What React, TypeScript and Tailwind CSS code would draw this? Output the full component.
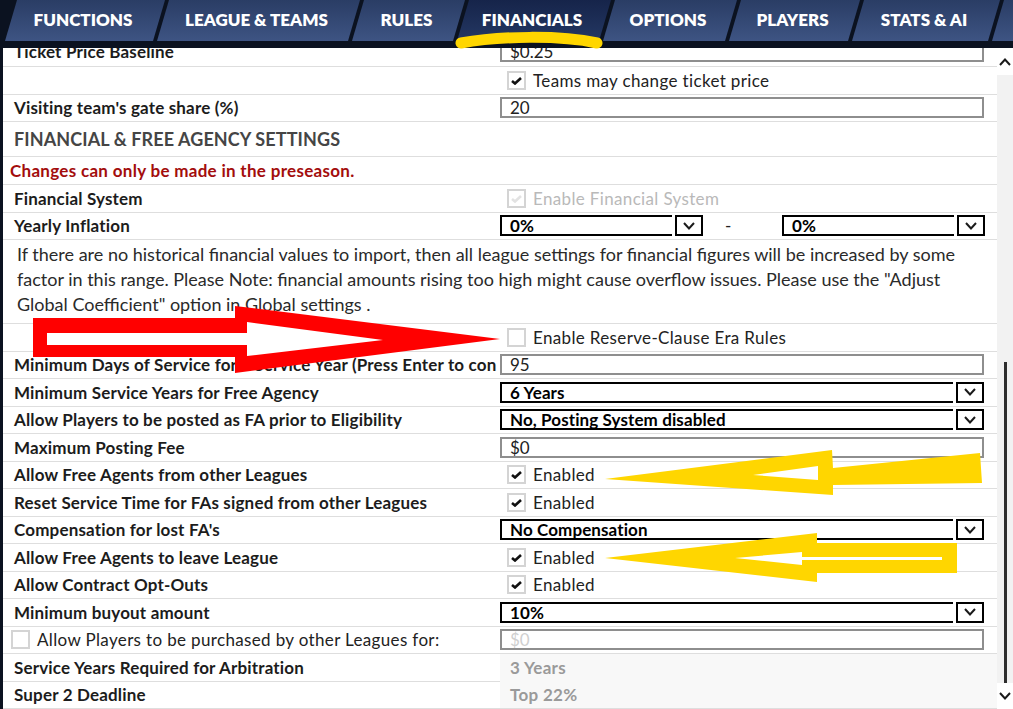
import React from 'react';

const tabs = [
  { name: 'FUNCTIONS', w: 'w-[160px]' },
  { name: 'LEAGUE & TEAMS', w: 'w-[203px]' },
  { name: 'RULES', w: 'w-[113px]' },
  { name: 'FINANCIALS', w: 'w-[154px]', active: true },
  { name: 'OPTIONS', w: 'w-[134px]' },
  { name: 'PLAYERS', w: 'w-[131px]' },
  { name: 'STATS & AI', w: 'w-[148px]' },
  { name: '', w: 'w-[60px]' },
];

const Chevron = ({ up = false }: { up?: boolean }) => (
  <svg width="12" height="8" viewBox="0 0 12 8">
    <polyline
      points={up ? '1,7 6,1.5 11,7' : '1,1 6,6.5 11,1'}
      fill="none"
      stroke="#1a1a1a"
      strokeWidth="2"
    />
  </svg>
);

const Check = ({ checked, disabled = false }: { checked: boolean; disabled?: boolean }) => (
  <div className="flex h-[19px] w-[19px] shrink-0 items-center justify-center border-2 border-[#d4d4d4] bg-white">
    {checked && (
      <svg width="11" height="9" viewBox="0 0 11 9">
        <path
          d="M1 5 L4 7.5 L10 2"
          fill="none"
          stroke={disabled ? '#e2e2e2' : '#111'}
          strokeWidth="2.6"
        />
      </svg>
    )}
  </div>
);

const Input = ({ value, disabled = false }: { value: string; disabled?: boolean }) => (
  <div
    className={`flex h-[21px] w-[484px] items-center border-2 border-[#8e8e8e] bg-white pl-[8px] text-[17px] ${
      disabled ? 'text-[#d0d0d0]' : 'text-[#222]'
    }`}
  >
    {value}
  </div>
);

const Select = ({ value, w = 'w-[453px]' }: { value: string; w?: string }) => (
  <div className="flex items-center">
    <div
      className={`flex h-[21px] ${w} items-center border-2 border-r-0 border-black bg-white pl-[8px] text-[17px] font-bold tracking-[0.1px] text-black`}
    >
      {value}
    </div>
    <div className="ml-[3px] flex h-[21px] w-[28px] items-center justify-center border-2 border-black bg-white">
      <Chevron />
    </div>
  </div>
);

const Toggle = ({ text, checked, disabled = false }: { text: string; checked: boolean; disabled?: boolean }) => (
  <div className="flex items-center pl-[7px]">
    <Check checked={checked} disabled={disabled} />
    <span className={`ml-[7px] text-[17px] tracking-[0.35px] ${disabled ? 'text-[#b9b9b9]' : 'text-[#222]'}`}>
      {text}
    </span>
  </div>
);

const Static = ({ text }: { text: string }) => (
  <div className="flex h-[27px] w-[497px] items-center bg-[#f8f8f8] pl-[10px] text-[17px] font-bold tracking-[0.3px] text-[#9a9a9a]">
    {text}
  </div>
);

const Row = ({
  label,
  children,
  h = 'h-[27.5px]',
}: {
  label?: React.ReactNode;
  children?: React.ReactNode;
  h?: string;
}) => (
  <div className={`flex ${h} shrink-0 items-center border-b border-[#dedede]`}>
    <div className="w-[497px] shrink-0 overflow-hidden whitespace-nowrap pl-[11px] text-[17px] font-bold tracking-[0.17px] text-[#1c1c1c]">
      {label}
    </div>
    <div className="flex w-[497px] items-center">{children}</div>
  </div>
);

export default function App() {
  return (
    <div className="relative h-[709px] w-[1013px] overflow-hidden bg-[#0b1220] font-[Lato,sans-serif]">
      {/* tab strip */}
      <div className="flex h-[41px] pl-[5px]">
        {tabs.map((t, i) => (
          <div
            key={i}
            className={`${t.w} ${i > 0 ? 'ml-[-8px]' : ''} flex shrink-0 items-center justify-center pb-[1px] pr-[4px] text-[17px] font-extrabold text-white [clip-path:polygon(12px_0,100%_0,calc(100%-12px)_100%,0_100%)] ${
              t.active
                ? 'bg-gradient-to-b from-[#16244a] to-[#243863]'
                : 'bg-gradient-to-b from-[#2a3d65] to-[#3e5483]'
            }`}
          >
            {t.name}
          </div>
        ))}
      </div>
      <div className="h-[7px]" />

      <div className="flex h-[661px]">
        <div className="w-[3px] shrink-0" />
        <div className="flex w-[994px] flex-col overflow-hidden bg-white">
          <div className="mt-[-11px]" />
          <Row label="Ticket Price Baseline" h="h-[30px]">
            <Input value="$0.25" />
          </Row>
          <Row>
            <Toggle text="Teams may change ticket price" checked />
          </Row>
          <Row label="Visiting team's gate share (%)">
            <Input value="20" />
          </Row>
          <div className="flex h-[35px] shrink-0 items-center border-b border-[#dedede] pl-[11px] text-[18px] font-bold tracking-[0.1px] text-[#454545]">
            FINANCIAL &amp; FREE AGENCY SETTINGS
          </div>
          <div className="flex h-[28px] shrink-0 items-center border-b border-[#dedede] pl-[7px] text-[17px] font-bold tracking-[0.3px] text-[#a30d0d]">
            Changes can only be made in the preseason.
          </div>
          <Row label="Financial System">
            <Toggle text="Enable Financial System" checked disabled />
          </Row>
          <Row label="Yearly Inflation">
            <Select value="0%" w="w-[172px]" />
            <span className="w-[79px] pl-[22px] text-[17px] text-[#222]">-</span>
            <Select value="0%" w="w-[172px]" />
          </Row>
          <div className="flex h-[84px] shrink-0 flex-col whitespace-nowrap border-b border-[#dedede] pl-[14px] pt-[2px] text-[18px] leading-[25px] text-[#2a2a2a]">
            <div>
              If there are no historical financial values to import, then all league settings for financial figures will be increased by some
            </div>
            <div>
              factor in this range. Please Note: financial amounts rising too high might cause overflow issues. Please use the "Adjust
            </div>
            <div>Global Coefficient" option in Global settings .</div>
          </div>
          <Row>
            <Toggle text="Enable Reserve-Clause Era Rules" checked={false} />
          </Row>
          <Row label="Minimum Days of Service for a Service Year (Press Enter to con">
            <Input value="95" />
          </Row>
          <Row label="Minimum Service Years for Free Agency">
            <Select value="6 Years" />
          </Row>
          <Row label="Allow Players to be posted as FA prior to Eligibility">
            <Select value="No, Posting System disabled" />
          </Row>
          <Row label="Maximum Posting Fee">
            <Input value="$0" />
          </Row>
          <Row label="Allow Free Agents from other Leagues">
            <Toggle text="Enabled" checked />
          </Row>
          <Row label="Reset Service Time for FAs signed from other Leagues">
            <Toggle text="Enabled" checked />
          </Row>
          <Row label="Compensation for lost FA's">
            <Select value="No Compensation" />
          </Row>
          <Row label="Allow Free Agents to leave League">
            <Toggle text="Enabled" checked />
          </Row>
          <Row label="Allow Contract Opt-Outs">
            <Toggle text="Enabled" checked />
          </Row>
          <Row label="Minimum buyout amount">
            <Select value="10%" />
          </Row>
          <Row
            label={
              <div className="ml-[-3px] flex items-center font-normal">
                <Check checked={false} />
                <span className="ml-[7px] text-[17px] tracking-[0.35px] text-[#222]">
                  Allow Players to be purchased by other Leagues for:
                </span>
              </div>
            }
          >
            <Input value="$0" disabled />
          </Row>
          <Row label="Service Years Required for Arbitration">
            <Static text="3 Years" />
          </Row>
          <Row label="Super 2 Deadline">
            <Static text="Top 22%" />
          </Row>
        </div>

        {/* scrollbar */}
        <div className="flex w-[16px] shrink-0 flex-col bg-white">
          <div className="flex h-[27px] items-center justify-center">
            <Chevron up />
          </div>
          <div className="flex-1 bg-[#f2f2f2]">
            <div className="ml-[7px] mt-[287px] h-[321px] w-[3px] bg-[#2e2e2e]" />
          </div>
          <div className="flex h-[26px] items-center justify-center">
            <Chevron />
          </div>
        </div>
      </div>

      {/* hand-drawn annotations */}
      <svg className="pointer-events-none absolute left-0 top-0" width="1013" height="709" viewBox="0 0 1013 709">
        <path d="M461 43 C 500 36, 560 35, 597 43" fill="none" stroke="#ffd600" strokeWidth="11" strokeLinecap="round" />
        <polygon points="33,318 235,318 235,306 500,339 235,373 235,357 33,357" fill="#ff0000" />
        <polygon points="47,333 247,333 247,322 383,340 247,356 247,345 47,345" fill="#ffffff" />
        <polygon points="605,479 832,450 833,468 980,453 982,483 833,485 833,495" fill="#ffd600" />
        <polygon points="753,475 818,466 818,480" fill="#ffffff" />
        <polygon points="605,558 817,533 817,543 957,543 957,573 817,573 817,582" fill="#ffd600" />
        <polygon points="735,558 802,552 802,557 942,557 942,560 802,560 802,565" fill="#ffffff" />
      </svg>
    </div>
  );
}
